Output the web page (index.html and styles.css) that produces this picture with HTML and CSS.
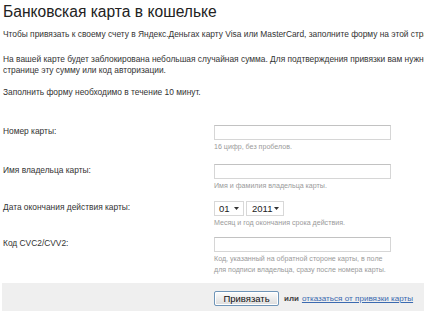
FILE: index.html
```html
<!DOCTYPE html>
<html lang="ru">
<head>
<meta charset="utf-8">
<link rel="stylesheet" href="styles.css">
</head>
<body>
<div class="page">
  <h1 class="title">Банковская карта в кошельке</h1>
  <p class="intro p1">Чтобы привязать к своему счету в Яндекс.Деньгах карту Visa или MasterCard, заполните форму на этой странице.</p>
  <p class="intro p2">На вашей карте будет заблокирована небольшая случайная сумма. Для подтверждения привязки вам нужно ввести на этой<br>странице эту сумму или код авторизации.</p>
  <p class="intro p3">Заполнить форму необходимо в течение 10 минут.</p>

  <div class="form">
    <div class="row row-card">
      <label class="label">Номер карты:</label>
      <div class="field">
        <div class="input"></div>
        <div class="hint">16 цифр, без пробелов.</div>
      </div>
    </div>
    <div class="row row-name">
      <label class="label">Имя владельца карты:</label>
      <div class="field">
        <div class="input"></div>
        <div class="hint">Имя и фамилия владельца карты.</div>
      </div>
    </div>
    <div class="row row-date">
      <label class="label">Дата окончания действия карты:</label>
      <div class="field">
        <div class="selects">
          <div class="select sel-month"><span>01</span><svg class="arrow" width="5" height="3" viewBox="0 0 5 3"><path d="M0 0H5L2.5 3Z" fill="#333"/></svg></div>
          <div class="select sel-year"><span>2011</span><svg class="arrow" width="5" height="3" viewBox="0 0 5 3"><path d="M0 0H5L2.5 3Z" fill="#333"/></svg></div>
        </div>
        <div class="hint">Месяц и год окончания срока действия.</div>
      </div>
    </div>
    <div class="row row-cvc">
      <label class="label">Код CVC2/CVV2:</label>
      <div class="field">
        <div class="input"></div>
        <div class="hint">Код, указанный на обратной стороне карты, в поле<br>для подписи владельца, сразу после номера карты.</div>
      </div>
    </div>
  </div>

  <div class="actions">
    <button class="btn" type="button">Привязать</button>
    <span class="or">или</span>
    <a class="link" href="#">отказаться от привязки карты</a>
  </div>
</div>
</body>
</html>
```

FILE: styles.css
```css
html, body {
  margin: 0;
  padding: 0;
  background: #fff;
  overflow: hidden;
}
body {
  font-family: "Liberation Sans", Arial, sans-serif;
  color: #333;
  font-size: 8.4px;
  line-height: 11px;
}
.page {
  position: relative;
  width: 424px;
  height: 311px;
  overflow: hidden;
  padding-left: 3px;
  box-sizing: border-box;
}
.title {
  margin: 0;
  padding-top: 2px;
  font-size: 15.6px;
  font-weight: normal;
  color: #222;
  line-height: 20px;
  white-space: nowrap;
}
.intro {
  margin: 0;
  font-size: 8.4px;
  line-height: 11px;
  white-space: nowrap;
  color: #333;
}
.p1 { margin-top: 7px; }
.p2 { margin-top: 14px; }
.p3 { margin-top: 11px; }
.form {
  margin-top: 27px;
}
.row {
  display: grid;
  grid-template-columns: 211px 177px;
}
.row-card { height: 39px; }
.row-name { height: 37px; }
.row-date { height: 36px; }
.label {
  font-size: 8.4px;
  color: #333;
  line-height: 11px;
  padding-top: 1px;
}
.input {
  height: 15px;
  border: 1px solid #d6d6d6;
  border-top-color: #c2c2c2;
  box-sizing: border-box;
  background: #fff;
}
.hint {
  font-size: 7.1px;
  line-height: 11px;
  color: #9a9a9a;
  margin-top: 2px;
}
.selects {
  display: flex;
  gap: 2px;
}
.select {
  height: 15px;
  box-sizing: border-box;
  border: 1px solid #d8d8d8;
  display: flex;
  align-items: center;
  justify-content: space-between;
  padding: 0 4px 0 4px;
  font-size: 9.5px;
  color: #222;
}
.sel-month { width: 30px; }
.sel-year { width: 38px; padding-left: 5px; }
.arrow { display: block; flex: none; }
.actions {
  position: absolute;
  left: 2px;
  right: 0;
  top: 283px;
  height: 28px;
  background: #efefef;
  display: flex;
  align-items: center;
  padding-left: 212px;
  box-sizing: border-box;
  white-space: nowrap;
}
.btn {
  flex: none;
  width: 65px;
  height: 15px;
  padding: 0;
  margin-top: 3px;
  font-family: "Liberation Sans", Arial, sans-serif;
  font-size: 9.5px;
  color: #111;
  border: 1px solid #6f95b8;
  border-radius: 2px;
  background: linear-gradient(#fdfdfd, #dcdcdc);
  box-shadow: inset 0 0 0 1px #fff;
}
.or {
  font-size: 8px;
  font-weight: bold;
  color: #444;
  margin-left: 5px;
  margin-top: 3px;
}
.link {
  font-size: 8.1px;
  color: #3b6ab0;
  text-decoration: underline;
  margin-left: 3px;
  margin-top: 3px;
}
```
